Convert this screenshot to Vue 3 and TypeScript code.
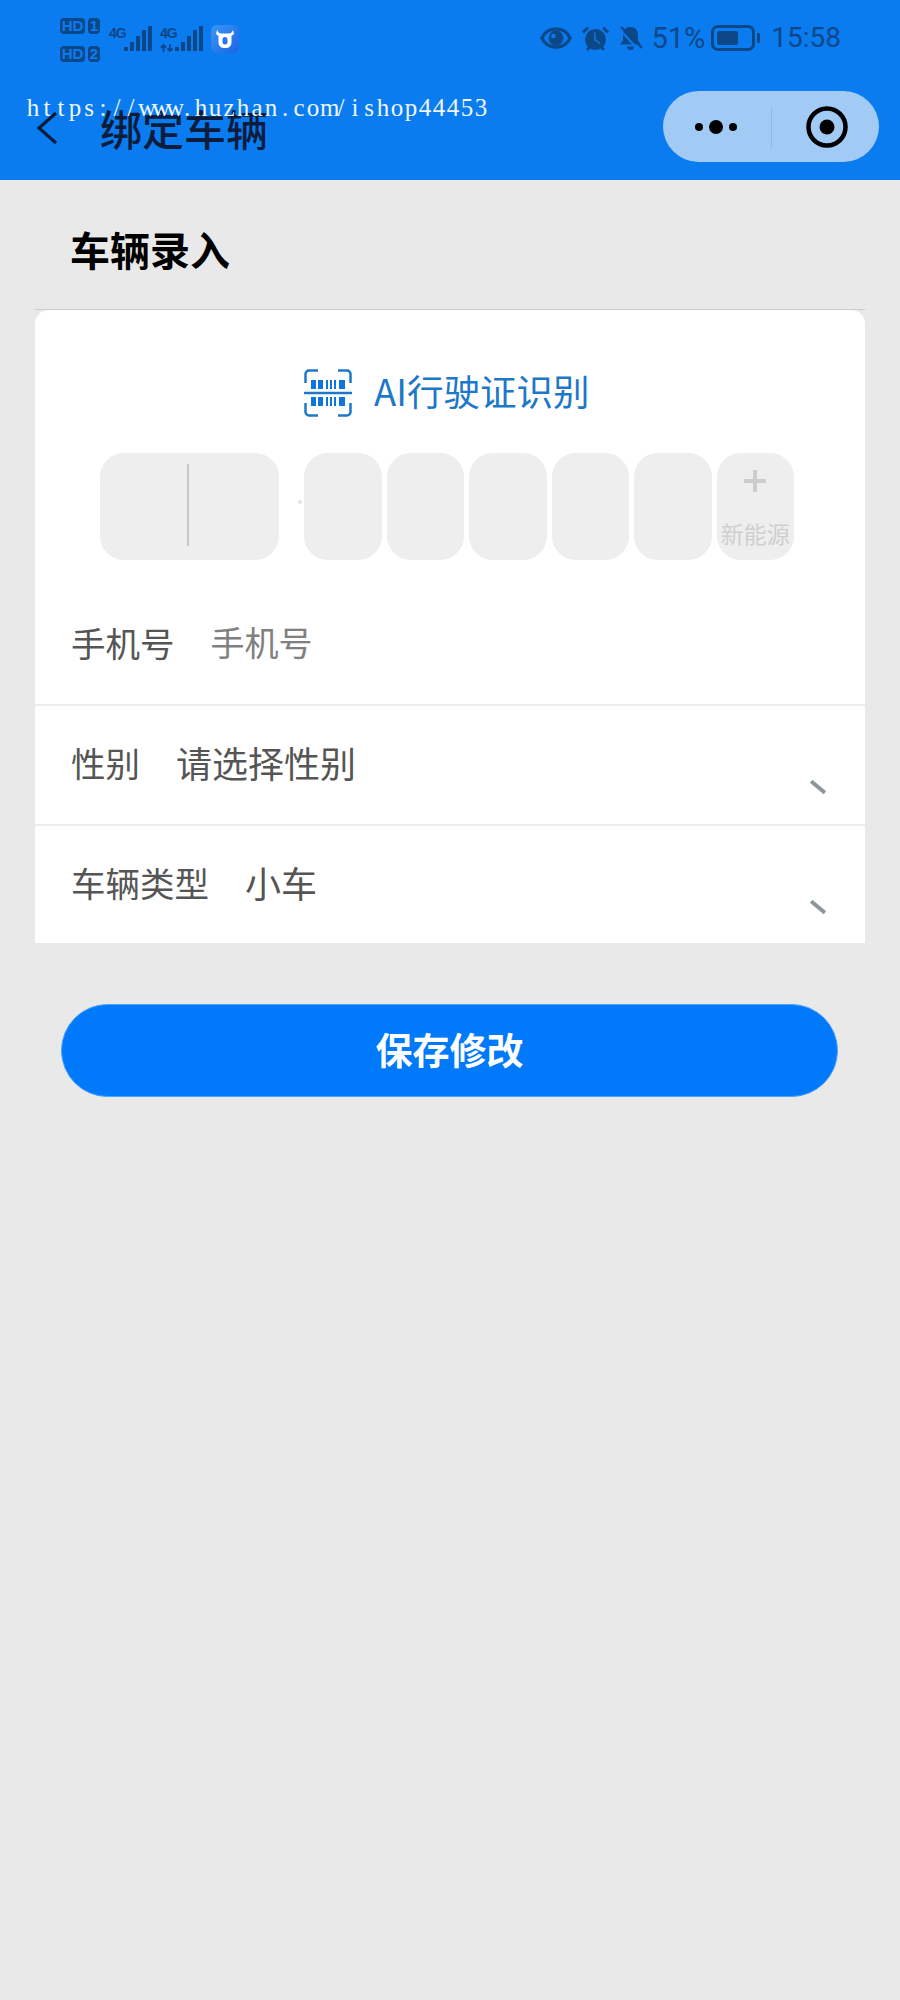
<script setup lang="ts">
const plateCells = [1, 2, 3, 4, 5]
const rows = [
  { label: '性别', value: '请选择性别' },
  { label: '车辆类型', value: '小车' },
]
// the watermark is a fixed-pitch serif, so every letter gets its own cell
const watermark = 'https://www.huzhan.com/ishop44453'.split('')
</script>

<template>
  <div class="page">
    <header class="top">
      <div class="status">
        <div class="status-left">
          <div class="hd-col">
            <div class="hd-line"><span class="hd">HD</span><span class="sim">1</span></div>
            <div class="hd-line"><span class="hd">HD</span><span class="sim">2</span></div>
          </div>
          <div class="net net-first">
            <span class="g4">4G</span>
            <svg width="28" height="26" viewBox="0 0 28 26" fill="#0c4788">
              <rect x="0" y="21" width="4" height="4" /><rect x="6" y="16" width="4" height="9" />
              <rect x="12" y="10" width="4" height="15" /><rect x="18" y="4" width="4" height="21" />
              <rect x="24" y="0" width="4" height="25" />
            </svg>
          </div>
          <div class="net net-second">
            <span class="g4">4G</span>
            <svg class="updown" width="14" height="8" viewBox="0 0 14 8">
              <path d="M3.500 8V1M1 3.500L3.500 1 6 3.500M10 0v7M7.500 4.500L10 7l2.500-2.500" fill="none" stroke="#0c4788" stroke-width="1.800" />
            </svg>
            <svg width="28" height="26" viewBox="0 0 28 26" fill="#0c4788">
              <rect x="0" y="21" width="4" height="4" /><rect x="6" y="16" width="4" height="9" />
              <rect x="12" y="10" width="4" height="15" /><rect x="18" y="4" width="4" height="21" />
              <rect x="24" y="0" width="4" height="25" />
            </svg>
          </div>
          <svg class="app-icon" width="28" height="28" viewBox="0 0 28 28">
            <defs>
              <linearGradient id="appBg" x1="0" y1="0" x2="1" y2="1">
                <stop offset="0" stop-color="#3a97f5" />
                <stop offset="1" stop-color="#1c63e4" />
              </linearGradient>
            </defs>
            <rect width="28" height="28" rx="6" fill="url(#appBg)" />
            <path d="M6 5l1.500 2.500c1 .8 2 1 3 1h7c1 0 2-.2 3-1L22 5l1 4-2.500 2v6.500a5.500 5.500 0 0 1-5.500 5.500h-2a5.500 5.500 0 0 1-5.500-5.500V11L5 9z" fill="#fff" />
            <rect x="11.500" y="12" width="5" height="7.500" rx="2.500" fill="#2a78ec" />
          </svg>
        </div>
        <div class="status-right">
          <svg width="32" height="22" viewBox="0 0 32 22">
            <path d="M1.800 11C5 4.500 10 1.800 16 1.800S27 4.500 30.200 11C27 17.500 22 20.200 16 20.200S5 17.500 1.800 11z" fill="none" stroke="#0c4788" stroke-width="3.200" />
            <circle cx="16" cy="11" r="7.500" fill="#0c4788" />
            <circle cx="13.500" cy="9" r="2.200" fill="#0a7cf0" />
          </svg>
          <svg class="ic-alarm" width="27" height="25" viewBox="0 0 27 25">
            <circle cx="13.500" cy="13.500" r="10.500" fill="#0c4788" />
            <path d="M13 6.500v7.500l5 3.500" fill="none" stroke="#0a7cf0" stroke-width="1.400" />
            <path d="M1 6.500L6 1.500M26 6.500L21 1.500M5 24l2.500-3M22 24l-2.500-3" stroke="#0c4788" stroke-width="2.800" />
          </svg>
          <svg class="ic-bell" width="25" height="25" viewBox="0 0 25 25">
            <path d="M12.500 1c4.800 0 7.500 3.500 7.500 8v5.500l3 4H2l3-4V9c0-4.500 2.700-8 7.500-8z" fill="#0c4788" />
            <path d="M9 20.500h7a3.500 3.500 0 0 1-7 0z" fill="#0c4788" />
            <path d="M1 3l20 21" stroke="#0a7cf0" stroke-width="2" />
            <path d="M3 1l21 21" stroke="#0c4788" stroke-width="2.200" />
          </svg>
          <span class="pct">51%</span>
          <div class="battery"><div class="battery-fill"></div></div>
          <div class="battery-nub"></div>
          <span class="time">15:58</span>
        </div>
      </div>
      <div class="nav">
        <svg class="back" width="22" height="34" viewBox="0 0 22 34">
          <path d="M20 2L3 17l17 15" fill="none" stroke="#0b1c3c" stroke-width="3.200" />
        </svg>
        <span class="nav-title">绑定车辆</span>
        <div class="capsule">
          <svg class="capsule-more" width="46" height="16" viewBox="0 0 46 16" fill="#000">
            <circle cx="6" cy="8" r="4" /><circle cx="23" cy="8" r="7" /><circle cx="40" cy="8" r="4" />
          </svg>
          <div class="capsule-line"></div>
          <svg class="capsule-target" width="42" height="42" viewBox="0 0 42 42">
            <circle cx="21" cy="21" r="18.500" fill="none" stroke="#000" stroke-width="4.500" />
            <circle cx="21" cy="21" r="7.500" fill="#000" />
          </svg>
        </div>
      </div>
      <div class="watermark"><span v-for="(c, i) in watermark" :key="i">{{ c }}</span></div>
    </header>

    <div class="section-head">
      <h2 class="section-title">车辆录入</h2>
    </div>

    <section class="card">
      <div class="scan">
        <svg width="48" height="48" viewBox="0 0 48 48">
          <path d="M14 1.500H5a3.500 3.500 0 0 0-3.500 3.500v9M34 1.500h9a3.500 3.500 0 0 1 3.500 3.500v9M14 46.500H5A3.500 3.500 0 0 1 1.500 43v-9M34 46.500h9a3.500 3.500 0 0 0 3.500-3.500v-9" fill="none" stroke="#1d78c9" stroke-width="2.500" />
          <path d="M0 24h48" stroke="#1d78c9" stroke-width="2.500" />
          <g fill="#0d74e0">
            <rect x="7" y="11" width="5" height="9" /><rect x="14" y="11" width="5" height="9" />
            <rect x="22" y="11" width="2" height="9" /><rect x="26" y="11" width="2" height="9" />
            <rect x="30" y="11" width="2" height="9" /><rect x="35" y="11" width="6" height="9" />
            <rect x="7" y="28" width="5" height="9" /><rect x="14" y="28" width="5" height="9" />
            <rect x="22" y="28" width="2" height="9" /><rect x="26" y="28" width="2" height="9" />
            <rect x="30" y="28" width="2" height="9" /><rect x="35" y="28" width="6" height="9" />
          </g>
        </svg>
        <span class="scan-text">AI行驶证识别</span>
      </div>

      <div class="plate">
        <div class="cell cell-wide"><div class="cursor"></div></div>
        <div class="plate-dot"></div>
        <div v-for="n in plateCells" :key="n" class="cell"></div>
        <div class="cell cell-new">
          <svg width="22" height="22" viewBox="0 0 22 22">
            <path d="M11 0v22M0 11h22" stroke="#cccccc" stroke-width="4" />
          </svg>
          <span>新能源</span>
        </div>
      </div>

      <div class="row row-phone">
        <span class="label">手机号</span>
        <span class="placeholder">手机号</span>
      </div>
      <div v-for="r in rows" :key="r.label" class="row row-select">
        <span class="label">{{ r.label }}</span>
        <span class="value">{{ r.value }}</span>
        <i class="arrow"></i>
      </div>
    </section>

    <button class="save">保存修改</button>
  </div>
</template>

<style scoped>
.page {
  width: 900px;
  height: 2000px;
  background: #e9e9e9;
  font-family: "Noto Sans CJK SC", "Liberation Sans", sans-serif;
  overflow: hidden;
}
.top {
  position: relative;
  height: 180px;
  background: #0a7cf0;
}
.status {
  height: 72px;
  display: flex;
  justify-content: space-between;
  padding: 18px 59px 0 60px;
  box-sizing: border-box;
}
.status-left { display: flex; align-items: flex-start; }
.hd-col { display: flex; flex-direction: column; gap: 12px; width: 40px; }
.hd-line { display: flex; gap: 3px; height: 16px; }
.hd, .sim {
  background: #0c4788;
  color: #0a7cf0;
  border-radius: 4px;
  font: bold 15px/16px "Liberation Sans", sans-serif;
  text-align: center;
}
.hd { width: 25px; }
.sim { width: 12px; }
.net { position: relative; display: flex; align-items: flex-start; margin-top: 8px; }
.net-first { margin-left: 9px; }
.net-second { margin-left: 8px; }
.g4 {
  color: #0c4788;
  font: bold 14px/14px "Liberation Sans", sans-serif;
  letter-spacing: -1px;
  width: 15px;
}
.updown { position: absolute; left: 0; top: 18px; }
.app-icon { margin: 7px 0 0 8px; }
.status-right { display: flex; align-items: center; height: 34px; margin-top: 3px; color: #0c4788; }
.ic-alarm { margin-left: 10px; }
.ic-bell { margin-left: 9px; }
.pct, .time { font: 28px/34px Roboto, "Liberation Sans", sans-serif; }
.pct { font-size: 29px; margin-left: 8px; }
.battery {
  width: 44px;
  height: 26px;
  margin-left: 6px;
  border: 3px solid #0c4788;
  border-radius: 7px;
  box-sizing: border-box;
  padding: 3px;
}
.battery-fill { width: 21px; height: 14px; background: #0c4788; border-radius: 2px; }
.battery-nub { width: 3px; height: 10px; margin-left: 2px; background: #0c4788; border-radius: 1px; }
.time { margin-left: 11px; }
.nav {
  height: 108px;
  display: flex;
  align-items: flex-start;
  padding-left: 36px;
}
.back { margin-top: 39px; }
.nav-title {
  margin: 28px 0 0 42px;
  color: #0b1c3c;
  font-size: 42px;
  line-height: 56px;
  font-weight: 500;
}
.capsule {
  margin: 19px 21px 0 auto;
  width: 216px;
  height: 71px;
  border-radius: 36px;
  background: #a1cbf5;
  display: flex;
  align-items: center;
  box-sizing: border-box;
  padding-left: 30px;
}
.capsule-line { width: 1px; height: 42px; margin-left: 32px; background: #8fbbe8; }
.capsule-target { margin-left: 34px; }
.watermark {
  position: absolute;
  left: 26px;
  top: 94px;
  color: #eef6ff;
  font: 25px/28px "Liberation Serif", serif;
  white-space: nowrap;
}
.watermark span {
  display: inline-block;
  width: 14px;
  text-align: center;
}
.section-head {
  margin: 0 35px;
  height: 130px;
  box-sizing: border-box;
  border-bottom: 1px solid #cccccc;
  padding: 44px 0 0 35px;
}
.section-title {
  margin: 0;
  font-size: 40px;
  line-height: 50px;
  font-weight: 700;
  color: #000;
}
.card {
  margin: 0 35px;
  height: 633px;
  box-sizing: border-box;
  background: #fff;
  border-radius: 14px 14px 0 0;
  padding-top: 59px;
}
.scan {
  display: flex;
  align-items: center;
  height: 48px;
  padding-left: 269px;
}
.scan-text {
  margin: -4px 0 0 22px;
  font-size: 36.500px;
  line-height: 48px;
  color: #1d78c9;
  white-space: nowrap;
}
.plate {
  margin-top: 36px;
  height: 107px;
  padding-left: 65px;
  display: flex;
  gap: 5px;
}
.cell {
  width: 77.500px;
  height: 107px;
  background: #eeeeee;
  border-radius: 24px;
}
.cell-wide {
  width: 179px;
  display: flex;
  justify-content: center;
  align-items: center;
}
.cursor { width: 2px; height: 82px; margin: 0 3px 4px 0; background: #c8c8c8; }
.plate-dot {
  width: 4px;
  height: 4px;
  margin: 47px -3px 0 14px;
  border-radius: 50%;
  background: #e4e4e4;
}
.cell-new {
  display: flex;
  flex-direction: column;
  align-items: center;
  padding-top: 17px;
  box-sizing: border-box;
  color: #cfcfcf;
  font-size: 23px;
  line-height: 30px;
}
.cell-new span { margin-top: 26px; white-space: nowrap; }
.row {
  position: relative;
  height: 120px;
  display: flex;
  box-sizing: border-box;
  padding-left: 36px;
  align-items: center;
  color: #555;
}
.row-phone { margin-top: 24px; padding-bottom: 4px; }
.row-select {
  border-top: 2px solid #ededed;
  align-items: flex-start;
  padding-top: 33px;
}
.label { font-size: 34.500px; line-height: 46px; }
.placeholder { margin-left: 36px; font-size: 34px; line-height: 46px; color: #808080; }
.value { margin-left: 36px; font-size: 36px; line-height: 46px; }
.arrow {
  position: absolute;
  right: 38px;
  top: 79px;
  width: 18px;
  height: 4px;
  background: #8c979c;
  transform: rotate(40deg);
}
.save {
  display: block;
  margin: 61px 0 0 61px;
  width: 777px;
  height: 93px;
  border: 1px solid #4aa3ff;
  border-radius: 47px;
  background: #0079fb;
  color: #fff;
  font-family: inherit;
  font-size: 37px;
  font-weight: 700;
  padding: 0 0 4px;
}
</style>

<style>
body { margin: 0; }
</style>
